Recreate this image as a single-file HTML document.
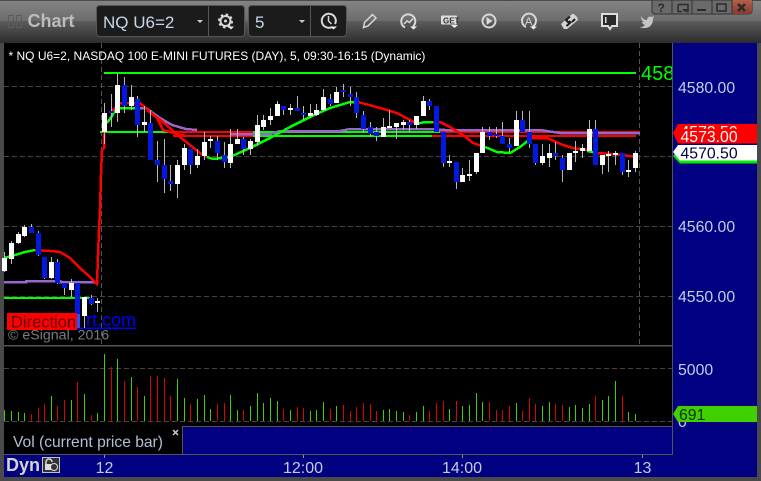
<!DOCTYPE html>
<html><head><meta charset="utf-8"><style>
html,body{margin:0;padding:0;background:#000;width:761px;height:481px;overflow:hidden}
svg{display:block;font-family:"Liberation Sans",Arial,sans-serif}
</style></head><body>
<svg width="761" height="481" viewBox="0 0 761 481" xmlns="http://www.w3.org/2000/svg">
<defs>
<linearGradient id="t1" x1="0" y1="0" x2="0" y2="1"><stop offset="0" stop-color="#858585"/><stop offset="1" stop-color="#6c6c6c"/></linearGradient>
<linearGradient id="t2" x1="0" y1="0" x2="0" y2="1"><stop offset="0" stop-color="#5c5c5c"/><stop offset="1" stop-color="#2c2c2c"/></linearGradient>
<linearGradient id="cl" x1="0" y1="0" x2="0" y2="1"><stop offset="0" stop-color="#b0604c"/><stop offset="1" stop-color="#8a3a2c"/></linearGradient>
<clipPath id="pane"><rect x="4" y="43" width="668" height="302"/></clipPath>
<clipPath id="r1"><rect x="673" y="124" width="84" height="5"/></clipPath>
</defs>
<rect width="761" height="481" fill="#4a4a4a"/>
<rect y="0" width="761" height="21" fill="url(#t1)"/>
<rect y="21" width="761" height="22" fill="url(#t2)"/>
<rect width="761" height="1" fill="#4a4a4a"/>
<rect x="4" y="43" width="753" height="434" fill="#000"/>
<rect x="673" y="43" width="84" height="434" fill="#000080"/>
<rect x="4" y="455" width="669" height="22" fill="#000080"/>
<rect x="183" y="427" width="489" height="27" fill="#000080"/>
<rect x="4" y="345" width="669" height="1.500" fill="#555"/>
<rect x="182" y="426" width="490" height="1" fill="#555"/>
<rect x="182" y="426" width="1" height="28" fill="#555"/>
<rect x="4" y="454" width="669" height="1" fill="#555"/>
<rect x="672" y="43" width="1" height="412" fill="#555"/>

<!-- toolbar -->
<g fill="none" stroke="#5c5c5c"><rect x="8.500" y="15.500" width="5" height="12"/><rect x="16.500" y="15.500" width="5" height="12"/></g>
<text x="27.500" y="27" font-size="18" font-weight="bold" fill="#bcbcbc">Chart</text>
<rect x="96.500" y="5.500" width="148" height="31" rx="3" fill="#1b1b1b" stroke="#555"/>
<rect x="208" y="6" width="1" height="30" fill="#555"/>
<rect x="248.500" y="5.500" width="98" height="31" rx="3" fill="#1b1b1b" stroke="#555"/>
<rect x="310" y="6" width="1" height="30" fill="#555"/>
<text x="103" y="28" font-size="17" fill="#c6d6ea">NQ U6=2</text>
<text x="255" y="28" font-size="17" fill="#c6d6ea">5</text>
<path d="M197 20h6l-3 3zM299 20h6l-3 3z" fill="#ccc"/>
<g fill="none" stroke="#d8d8d8" stroke-width="2">
<circle cx="225.500" cy="21" r="5"/>
<circle cx="225.500" cy="21" r="6.500" stroke-width="2" stroke-dasharray="2.500 2.600"/>
<path d="M332 27a7 7 0 1 1 3-3"/><path d="M328.500 16v5l3 3" stroke-width="1.500"/>
<path d="M363.500 27.500l1-5 8-8 3.500 3.500-8 8z" stroke-width="1.500"/>
<path d="M413 26.500a7 7 0 1 0-8 1"/><path d="M404 24l3-3 2.500 1.500 3.500-4" stroke-width="1.500"/>
<circle cx="489" cy="21" r="6.500"/>
<path d="M532 27a7 7 0 1 0-6 0"/>
</g>
<circle cx="225.500" cy="21" r="1.500" fill="#d8d8d8"/>
<path d="M486.500 17v8l6-4z" fill="#d8d8d8"/>
<path d="M228 26.500h6l-3 3zM330 26.500h7l-3.500 3zM410 26.500h7l-3.500 3zM451 25h7l-3.500 3zM530 26.500h7l-3.500 3z" fill="#f0f0f0"/>
<rect x="441" y="15.500" width="16" height="9" rx="1" fill="#dcdcdc"/>
<text x="443" y="23.500" font-size="8" font-weight="bold" fill="#333">GET</text>
<text x="525" y="25" font-size="11" fill="#dcdcdc">A</text>
<path d="M561 24l11-10 2 0 3 3 1 3-11 9-3 0z" fill="#d4d4d4"/>
<path d="M566.500 26l4-3.500-1.500-1.500M569 23l-3-3 4-3.500M572 22l3-3" stroke="#1c1c1c" stroke-width="2" fill="none"/>
<path d="M602 14h15v12h-5l-2 3-2-3h-6z" fill="#2a2a2a" stroke="#dedede" stroke-width="2"/>
<rect x="605" y="17" width="1.500" height="6" fill="#dedede"/>
<path d="M641 16c2 3 3 4 6 4 0-3 3-4 5-3l2-1-1 3c0 6-4 9-8 9-2 0-4 0-5-1 2 0 3 0 5-2-3-1-3-3-3-3h2c-2-1-3-3-3-6z" fill="#c4c4c4"/>
<!-- window buttons -->
<path d="M652 0v11a3 3 0 0 0 3 3h94a3 3 0 0 0 3-3V0z" fill="#6a6a6a" stroke="#333"/>
<path d="M732 0v14h17a3 3 0 0 0 3-3V0z" fill="url(#cl)"/>
<path d="M672 0v14M692 0v14M712 0v14M732 0v14" stroke="#333"/>
<text x="657.500" y="12" font-size="12" font-weight="bold" fill="#2a2a2a">?</text>
<path d="M678 4.500h10v7h-2M678 4.500v7h4" fill="none" stroke="#2a2a2a" stroke-width="1.500"/><path d="M682 9h6l-3 3z" fill="#2a2a2a"/>
<rect x="697" y="9" width="9" height="2" fill="#2a2a2a"/>
<rect x="717" y="4" width="9" height="7" fill="none" stroke="#2a2a2a" stroke-width="1.500"/>
<path d="M738 4l7 7M745 4l-7 7" stroke="#2a2a2a" stroke-width="2.500"/>

<!-- grid -->
<g stroke="#444" stroke-dasharray="5 3" fill="none">
<path d="M4 86.500H672M4 156.500H672M4 226.500H672M4 296.500H672M4 368.500H672M4 421.500H672"/>
<path d="M101.500 43V345M639.500 43V345" stroke="#555"/>
</g>

<g clip-path="url(#pane)">
<text x="641" y="80" font-size="20" fill="#00ff00">4580</text>
</g>
<text x="8.500" y="60" font-size="12" fill="#fff">* NQ U6=2, NASDAQ 100 E-MINI FUTURES (DAY), 5, 09:30-16:15 (Dynamic)</text>

<!-- horizontal levels -->
<g fill="none" stroke-width="2" shape-rendering="crispEdges">
<path d="M104 73H636" stroke="#00ff00"/>
<path d="M4 298H90" stroke="#00ff00"/>
<path d="M100 132H440M175 136H440" stroke="#00ff00"/>
<path d="M173 132H253M173 136H253M440 132H640M432 136H636" stroke="#ff0000"/>
</g>
<!-- purple -->
<g fill="none" stroke="#9966cc" stroke-width="2.500" shape-rendering="crispEdges">
<path d="M4 282H26V281H60V282H97"/>
<path d="M128 108H146L160 118L172 125L186 129L197 130"/>
<path d="M230 134H270L280 131H340L350 129H430L445 130H540L560 133H640"/>
</g>
<!-- moving average -->
<g fill="none" stroke-width="2.500" shape-rendering="crispEdges">
<path d="M4 258L15 255L25 252L35 250" stroke="#00ff00"/>
<path d="M35 250L50 251L60 252L70 258L80 268L90 277L97 284L98 255L99 230L100 210L101 175L102 150L104 148L104 115" stroke="#ff0000"/>
<path d="M107 123L112 116L116 108L140 108" stroke="#00ff00"/>
<path d="M110 113L120 103L140 103L157 118L163 130L177 134L186 136" stroke="#ff0000"/>
<path d="M147 110L163 122L180 137L200 153L207 157" stroke="#ff0000"/>
<path d="M207 157L213 159L230 157L250 148L270 138L290 127L310 117L330 108L350 102L358 102" stroke="#00ff00"/>
<path d="M358 102L380 108L397 113L410 120L416 123" stroke="#ff0000"/>
<path d="M416 124L425 122L433 122" stroke="#00ff00"/>
<path d="M433 122L440 122L450 127L463 135L473 143L485 147" stroke="#ff0000"/>
<path d="M485 147L497 152L510 153L520 147L529 140" stroke="#00ff00"/>
<path d="M529 138L547 138L563 145L573 148L587 150" stroke="#ff0000"/>
<path d="M587 151L598 153" stroke="#00ff00"/>
<path d="M598 153L623 155L636 157" stroke="#ff0000"/>
</g>

<!-- watermark link under candles -->
<text x="136" y="326" font-size="18" fill="#0000ff" text-anchor="end">rt.com</text>
<rect x="77" y="327.500" width="59" height="1.500" fill="#0000ff"/>

<!-- candle wicks -->
<path shape-rendering="crispEdges" fill="none" stroke="#b8b8b8" d="M4.500 252V272M11.500 241V264M18.500 232V244M24.500 225V237M31.500 224V233M38.500 231V256M44.500 257V279M51.500 257V279M57.500 259V284M64.500 283V295M71.500 279V297M77.500 283V316M84.500 297V328M91.500 295V305M97.500 298V312M104.500 103V144M111.500 94V127M117.500 73V122M124.500 77V113M131.500 85V110M137.500 96V137M144.500 106V132M150.500 110V160M157.500 141V182M164.500 139V193M170.500 165V191M177.500 160V198M184.500 144V170M190.500 149V174M197.500 149V168M204.500 132V160M210.500 136V148M217.500 136V160M224.500 142V168M230.500 129V168M237.500 129V144M243.500 137V155M250.500 139V155M257.500 115V146M263.500 115V130M270.500 108V125M277.500 101V116M283.500 106V115M290.500 104V115M297.500 96V111M303.500 106V120M310.500 104V118M316.500 104V116M323.500 89V111M330.500 94V106M336.500 87V103M343.500 84V97M350.500 87V106M356.500 92V118M363.500 111V132M370.500 122V137M376.500 127V141M383.500 118V137M389.500 110V128M396.500 123V139M403.500 120V130M409.500 120V132M416.500 116V129M423.500 96V116M429.500 99V110M436.500 106V132M443.500 132V167M449.500 155V167M456.500 162V189M462.500 168V182M469.500 160V181M476.500 153V174M482.500 127V153M489.500 127V140M496.500 127V138M502.500 122V144M509.500 138V152M516.500 111V146M522.500 111V132M529.500 111V148M535.500 144V165M542.500 144V165M549.500 144V167M555.500 142V160M562.500 155V182M569.500 153V170M575.500 141V162M582.500 144V158M589.500 120V151M595.500 120V165M602.500 155V174M608.500 151V172M615.500 151V165M622.500 153V175M628.500 160V177M635.500 151V172"/>
<!-- white bodies -->
<path shape-rendering="crispEdges" fill="none" stroke="#fff" stroke-width="5" d="M4.500 258V271M11.500 243V259M18.500 234V243M24.500 227V236M51.500 262V278M71.500 283V290M84.500 297V316M97.500 301V303M104.500 113V132M117.500 85V113M131.500 97V106M144.500 122V125M177.500 165V184M184.500 148V165M197.500 156V165M204.500 142V156M210.500 139V141M230.500 144V163M237.500 139V144M250.500 141V149M257.500 125V142M263.500 120V127M270.500 116V120M277.500 104V116M290.500 108V110M310.500 113V116M316.500 110V115M323.500 97V110M336.500 92V103M383.500 127V137M389.500 126V128M396.500 123V127M403.500 122V125M416.500 116V125M423.500 101V116M449.500 161V163M462.500 175V182M469.500 174V176M476.500 153V172M482.500 132V153M516.500 120V146M542.500 156V163M549.500 153V158M569.500 153V170M575.500 151V153M582.500 148V151M589.500 129V151M602.500 155V165M608.500 154V156M615.500 153V155M628.500 170V172M635.500 153V168"/>
<!-- blue bodies -->
<path shape-rendering="crispEdges" fill="none" stroke="#0018e0" stroke-width="5" d="M31.500 227V233M38.500 233V255M44.500 257V278M57.500 262V283M64.500 283V288M77.500 283V314M91.500 298V304M111.500 111V113M124.500 85V106M137.500 99V125M150.500 123V160M157.500 160V165M164.500 165V179M170.500 181V184M190.500 149V165M217.500 141V153M224.500 155V162M243.500 139V149M283.500 106V110M297.500 108V111M303.500 113V115M330.500 99V104M343.500 90V92M350.500 94V97M356.500 97V113M363.500 115V129M370.500 127V134M376.500 132V136M409.500 122V125M429.500 101V106M436.500 106V132M443.500 132V163M456.500 162V182M489.500 132V136M496.500 134V136M502.500 136V144M509.500 144V148M522.500 120V132M529.500 132V144M535.500 144V163M555.500 153V156M562.500 158V170M595.500 129V165M622.500 153V172"/>

<!-- watermark -->
<rect x="77" y="314" width="3" height="14" fill="#3050ff"/>
<rect x="7" y="313" width="70" height="17" fill="#ff0000"/>
<text x="11" y="327.500" font-size="16.500" fill="#5c0000">Direction</text>
<text x="8" y="339.500" font-size="14.200" fill="#7c7c7c">© eSignal, 2016</text>

<!-- volume -->
<path shape-rendering="crispEdges" fill="none" stroke="#40d000" d="M4.500 421V410M11.500 421V411M18.500 421V412M24.500 421V413M51.500 421V396M71.500 421V400M84.500 421V394M97.500 421V413M104.500 421V354M117.500 421V359M131.500 421V377M144.500 421V396M177.500 421V379M184.500 421V398M197.500 421V399M204.500 421V395M210.500 421V409M230.500 421V395M237.500 421V410M250.500 421V406M257.500 421V393M263.500 421V403M270.500 421V398M277.500 421V401M290.500 421V410M310.500 421V411M316.500 421V410M323.500 421V402M336.500 421V406M383.500 421V410M389.500 421V409M396.500 421V411M403.500 421V412M416.500 421V412M423.500 421V406M449.500 421V409M462.500 421V406M469.500 421V405M476.500 421V393M482.500 421V402M516.500 421V403M542.500 421V406M549.500 421V402M569.500 421V407M575.500 421V405M582.500 421V408M589.500 421V404M602.500 421V400M608.500 421V396M615.500 421V381M628.500 421V412M635.500 421V414"/>
<path shape-rendering="crispEdges" fill="none" stroke="#e00000" d="M31.500 421V414M38.500 421V408M44.500 421V404M57.500 421V406M64.500 421V400M77.500 421V382M91.500 421V415M111.500 421V367M124.500 421V381M137.500 421V387M150.500 421V376M157.500 421V376M164.500 421V378M170.500 421V396M190.500 421V404M217.500 421V404M224.500 421V403M243.500 421V410M283.500 421V409M297.500 421V407M303.500 421V408M330.500 421V409M343.500 421V405M350.500 421V411M356.500 421V407M363.500 421V403M370.500 421V404M376.500 421V411M409.500 421V415M429.500 421V411M436.500 421V403M443.500 421V401M456.500 421V401M489.500 421V402M496.500 421V410M502.500 421V410M509.500 421V406M522.500 421V411M529.500 421V398M535.500 421V404M555.500 421V404M562.500 421V405M595.500 421V396M622.500 421V396"/>

<!-- legend -->
<text x="13" y="447" font-size="15.600" fill="#b0c0d4">Vol (current price bar)</text>
<path d="M173 430l5 5M178 430l-5 5" stroke="#ccc" stroke-width="1.500"/>

<!-- price axis -->
<g font-size="15.800" fill="#c4cce8">
<text x="678" y="93">4580.00</text>
<text x="678" y="232">4560.00</text>
<text x="678" y="302">4550.00</text>
<text x="678" y="375">5000</text>
<text x="678" y="427">0</text>
</g>
<path d="M678 124H757V143.500H678L673 133Z" fill="#ff0000"/>
<text x="680.500" y="137" font-size="15.800" fill="#fff" clip-path="url(#r1)">4573.50</text>
<text x="680.500" y="142" font-size="15.800" fill="#fff">4573.00</text>
<path d="M678 150H757V163.500H680L673 156Z" fill="#00ee00"/>
<path d="M678 145H757V160.500H680L673 152Z" fill="#fff"/>
<text x="680.500" y="158.500" font-size="15.800" fill="#000040">4570.50</text>
<path d="M678 406H757V422H678L673 414Z" fill="#40d000"/>
<text x="679" y="420" font-size="15.800" fill="#0c3000">691</text>

<!-- time axis -->
<path d="M104.500 455v3M303.500 455v3M462.500 455v3M642.500 455v3" stroke="#8890b0"/>
<g font-size="16" fill="#c4cce8" text-anchor="middle">
<text x="104.500" y="473">12</text>
<text x="303" y="473">12:00</text>
<text x="462" y="473">14:00</text>
<text x="642.500" y="473">13</text>
</g>
<text x="6" y="471" font-size="18" font-weight="bold" fill="#d4d4d4">Dyn</text>
<rect x="42.500" y="457.500" width="17" height="15" fill="#333" stroke="#c0c0c0"/>
<path d="M46 465v-3a3 3 0 0 1 6 0" fill="none" stroke="#ddd" stroke-width="1.500"/>
<rect x="45" y="464" width="6" height="6" fill="#ddd"/>
<circle cx="54" cy="467" r="3.500" fill="#333" stroke="#ddd"/>
</svg>
</body></html>
